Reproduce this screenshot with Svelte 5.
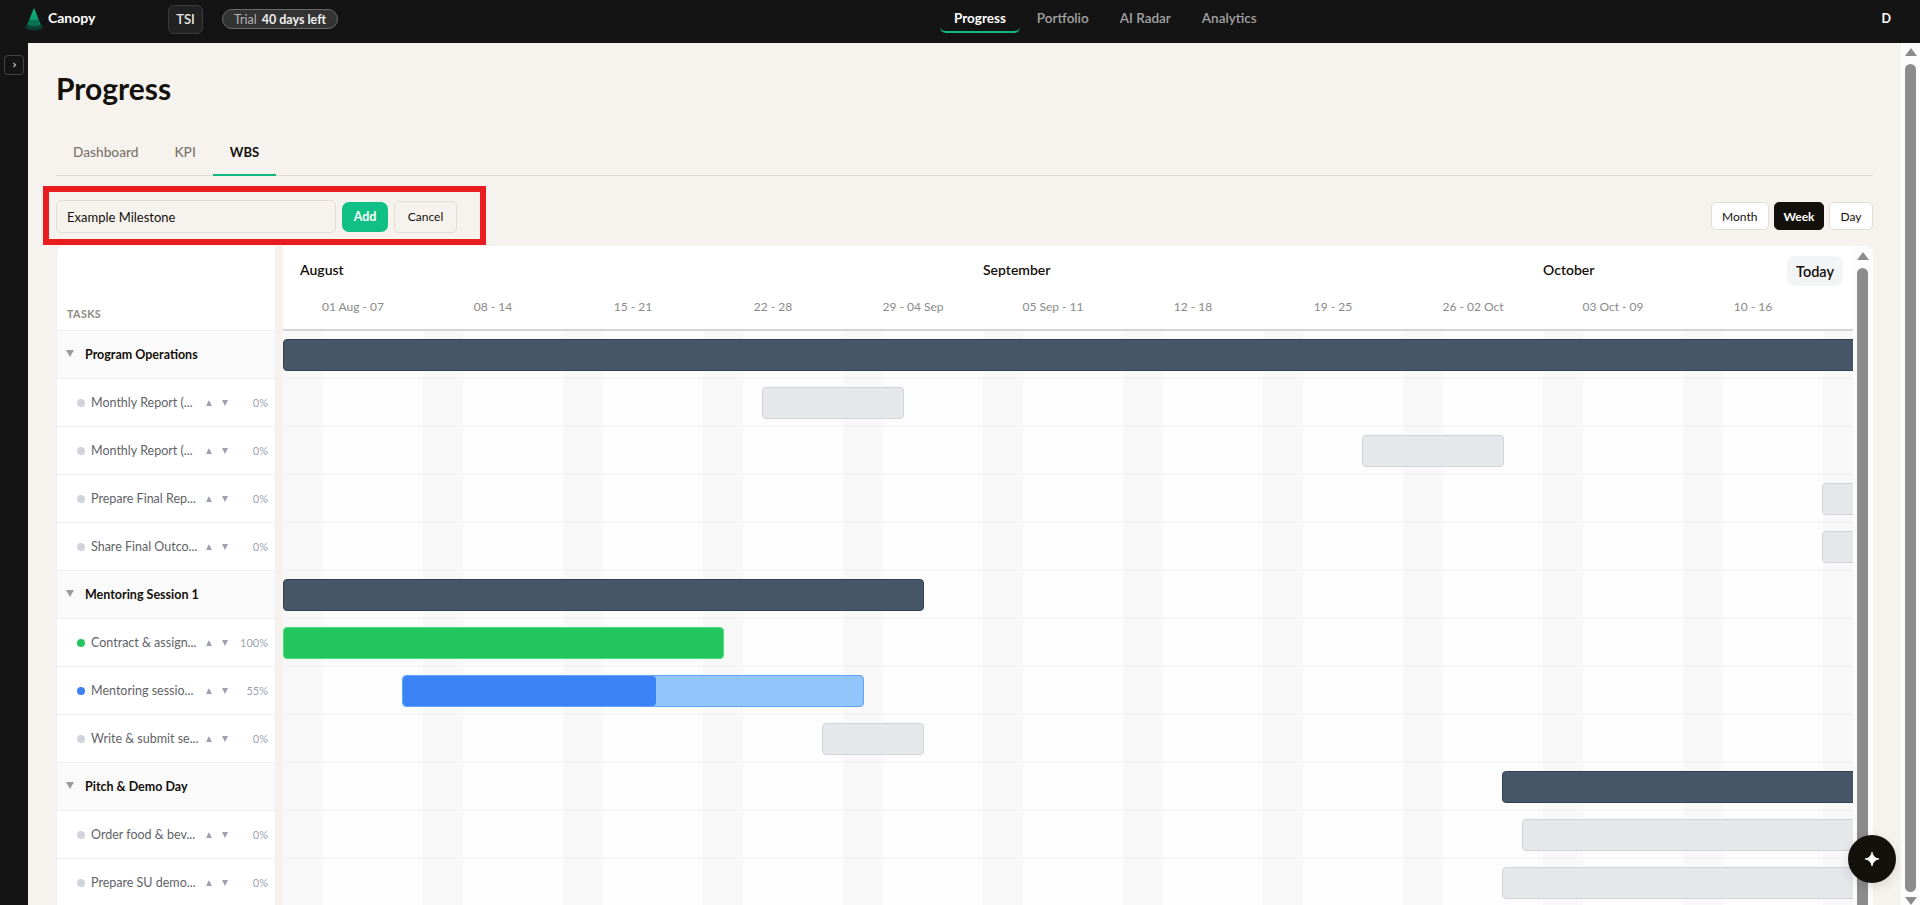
<script>
	const nav = ['Progress', 'Portfolio', 'AI Radar', 'Analytics'];
	const tabs = ['Dashboard', 'KPI', 'WBS'];
	const months = [
		{ label: 'August', left: 17 },
		{ label: 'September', left: 700 },
		{ label: 'October', left: 1260 }
	];
	const weeks = ['01 Aug - 07', '08 - 14', '15 - 21', '22 - 28', '29 - 04 Sep', '05 Sep - 11', '12 - 18', '19 - 25', '26 - 02 Oct', '03 Oct - 09', '10 - 16'];
	// start / end are in days from 1 Aug, one day is 20px
	const rows = [
		{ group: true, name: 'Program Operations', start: 0, end: 79 },
		{ name: 'Monthly Report (...', pct: 0, start: 24, end: 31 },
		{ name: 'Monthly Report (...', pct: 0, start: 54, end: 61 },
		{ name: 'Prepare Final Rep...', pct: 0, start: 77, end: 79 },
		{ name: 'Share Final Outco...', pct: 0, start: 77, end: 79 },
		{ group: true, name: 'Mentoring Session 1', start: 0, end: 32 },
		{ name: 'Contract & assign...', pct: 100, start: 0, end: 22 },
		{ name: 'Mentoring sessio...', pct: 55, start: 6, end: 29 },
		{ name: 'Write & submit se...', pct: 0, start: 27, end: 32 },
		{ group: true, name: 'Pitch & Demo Day', start: 61, end: 79 },
		{ name: 'Order food & bev...', pct: 0, start: 62, end: 79 },
		{ name: 'Prepare SU demo...', pct: 0, start: 61, end: 79 }
	];
	const status = (r) => (r.pct === 100 ? 'done' : r.pct > 0 ? 'active' : 'todo');
	const barLeft = (r) => (r.start > 0 ? r.start * 20 - 1 : 0);
</script>

<div class="page">
	<header class="topbar">
		<div class="brand">
			<svg width="20" height="24" viewBox="0 0 20 24">
				<defs>
					<linearGradient id="cone" x1="0" y1="0" x2="0" y2="1">
						<stop offset="0" stop-color="#10b981" />
						<stop offset="0.55" stop-color="#0f9d6e" />
						<stop offset="1" stop-color="#0b5a43" />
					</linearGradient>
				</defs>
				<ellipse cx="10" cy="20" rx="9" ry="3.5" fill="#0a3d2f" />
				<path d="M10 1 L17 18 Q10 22 3 18 Z" fill="url(#cone)" />
				<path d="M5.4 12.5 Q10 15 14.6 12.5 L15.4 14.4 Q10 17 4.6 14.4 Z" fill="#0b6e50" />
			</svg>
			<span>Canopy</span>
		</div>
		<div class="org">TSI</div>
		<div class="trial"><span>Trial</span> <b>40 days left</b></div>
		<nav>
			{#each nav as item, i}
				<a class:on={i === 0} href="#top">{item}</a>
			{/each}
		</nav>
		<div class="user">D</div>
	</header>

	<div class="body">
		<aside class="side">
			<button class="expand" aria-label="Expand">
				<svg width="5" height="6" viewBox="0 0 5 6"><path d="M1.5 1 L3.5 3 L1.5 5" fill="none" stroke="#b9b9b9" stroke-width="1.2" /></svg>
			</button>
		</aside>

		<main>
			<h1>Progress</h1>
			<div class="tabs">
				{#each tabs as tab, i}
					<a class:on={i === 2} href="#top">{tab}</a>
				{/each}
			</div>

			<div class="toolbar">
				<div class="add-form">
					<input value="Example Milestone" />
					<button class="add">Add</button>
					<button class="cancel">Cancel</button>
				</div>
				<div class="scale">
					<button>Month</button>
					<button class="on">Week</button>
					<button>Day</button>
				</div>
				<div class="callout"></div>
			</div>

			<div class="gantt">
				<section class="tasks">
					<div class="tasks-head">TASKS</div>
					{#each rows as r}
						{#if r.group}
							<div class="task group">
								<i class="caret"></i>
								<span class="group-name">{r.name}</span>
							</div>
						{:else}
							<div class="task">
								<i class="dot {status(r)}"></i>
								<span class="name">{r.name}</span>
								<i class="move up"></i>
								<i class="move"></i>
								<span class="pct">{r.pct}%</span>
							</div>
						{/if}
					{/each}
				</section>

				<section class="chart">
					<div class="timeline">
						<div class="chart-head">
							{#each months as m}
								<span class="month" style="left:{m.left}px">{m.label}</span>
							{/each}
							<button class="today">Today</button>
							<div class="weeks">
								{#each weeks as w}
									<span>{w}</span>
								{/each}
							</div>
						</div>
						<div class="grid">
							{#each rows as r}
								<div class="line">
									<div
										class="bar {r.group ? 'summary' : status(r)}"
										style="left:{barLeft(r)}px;width:{r.end * 20 - barLeft(r) + 1}px"
									>
										{#if r.pct > 0 && r.pct < 100}
											<div class="fill" style="width:{r.pct}%"></div>
										{/if}
									</div>
								</div>
							{/each}
						</div>
					</div>
					<div class="bar-scroll">
						<i class="arrow up"></i>
						<div class="thumb"></div>
					</div>
				</section>
			</div>
			<button class="fab" aria-label="Assistant">
				<svg width="16" height="16" viewBox="0 0 16 16"><path d="M8 1 Q9 7 15 8 Q9 9 8 15 Q7 9 1 8 Q7 7 8 1 Z" fill="#fff" stroke="#fff" stroke-width=".8" /></svg>
			</button>
		</main>

		<div class="page-scroll">
			<i class="arrow up"></i>
			<div class="thumb"></div>
			<i class="arrow"></i>
		</div>
	</div>
</div>

<style>
	:global(body) {
		font-family: Lato, "Noto Sans", sans-serif;
		background: #141414;
	}
	.page {
		height: 905px;
		display: flex;
		flex-direction: column;
		overflow: hidden;
	}
	button {
		font: inherit;
		cursor: pointer;
	}
	a {
		text-decoration: none;
	}

	.topbar {
		height: 43px;
		flex: none;
		display: flex;
		align-items: center;
		position: relative;
		background: #141414;
		color: #fff;
	}
	.brand {
		display: flex;
		align-items: center;
		gap: 4px;
		margin-left: 24px;
		width: 144px;
		font-size: 14px;
		font-weight: 700;
		margin-top: -6px;
	}
	.brand span {
		margin-top: -2px;
	}
	.org {
		width: 35px;
		height: 29px;
		box-sizing: border-box;
		display: grid;
		place-items: center;
		margin-top: -5px;
		background: #222;
		border: 1px solid #3b3b3b;
		border-radius: 6px;
		font-size: 13px;
		font-weight: 600;
		color: #e8e8e8;
	}
	.trial {
		margin-left: 19px;
		margin-top: -5px;
		width: 116px;
		height: 20px;
		box-sizing: border-box;
		display: flex;
		align-items: center;
		justify-content: center;
		gap: 5px;
		background: #333;
		border: 1px solid #6b6b6b;
		border-radius: 10px;
		font-size: 12.5px;
		color: #b5b5b5;
		white-space: nowrap;
	}
	.trial b {
		color: #eee;
		font-weight: 700;
	}
	nav {
		position: absolute;
		left: 940px;
		top: 0;
		display: flex;
	}
	nav a {
		height: 33px;
		box-sizing: border-box;
		padding: 10px 14px 0;
		margin-right: 3px;
		font-size: 13.5px;
		font-weight: 600;
		color: #a3a3a3;
		white-space: nowrap;
	}
	nav a.on {
		color: #fff;
		font-weight: 700;
		border-bottom: 2px solid #10b981;
		border-radius: 0 0 6px 6px;
	}
	.user {
		position: absolute;
		right: 29px;
		top: 11px;
		font-size: 12.5px;
		font-weight: 700;
	}

	.body {
		flex: 1;
		display: flex;
		min-height: 0;
	}
	.side {
		width: 28px;
		flex: none;
		padding: 12px 0 0 4px;
		box-sizing: border-box;
	}
	.expand {
		width: 20px;
		height: 20px;
		padding: 0;
		display: grid;
		place-items: center;
		background: transparent;
		border: 1px solid #444;
		border-radius: 4px;
	}

	main {
		flex: 1;
		min-width: 0;
		position: relative;
		background: #f6f3ee;
		padding: 0 28px 0 28px;
		overflow: hidden;
	}
	h1 {
		margin: 27px 0 0;
		height: 36px;
		font-size: 30px;
		line-height: 36px;
		font-weight: 700;
		color: #14100b;
	}
	.tabs {
		margin-top: 25px;
		height: 45px;
		box-sizing: border-box;
		display: flex;
		border-bottom: 1px solid #e2ddd5;
	}
	.tabs a {
		padding: 12px 18px 0;
		font-size: 13.7px;
		font-weight: 500;
		color: #7b746c;
		position: relative;
	}
	.tabs a:first-child {
		padding-left: 17px;
	}
	.tabs a:nth-child(2) {
		padding-right: 17px;
	}
	.tabs a.on {
		color: #14100b;
		font-size: 13px;
		font-weight: 700;
		padding: 13px 17px 0;
	}
	.tabs a.on::after {
		content: '';
		position: absolute;
		left: 0;
		right: 0;
		bottom: -1px;
		height: 2px;
		background: #10b981;
	}

	.toolbar {
		height: 70px;
		display: flex;
		justify-content: space-between;
		align-items: flex-start;
		padding-top: 24px;
		box-sizing: border-box;
		position: relative;
	}
	.add-form {
		display: flex;
		align-items: center;
		gap: 6px;
	}
	.add-form input {
		width: 280px;
		height: 33px;
		box-sizing: border-box;
		padding: 0 10px;
		background: #f6f3ee;
		border: 1px solid #e2ddd5;
		border-radius: 5px;
		font: 13px Lato, sans-serif;
		color: #14100b;
	}
	.add {
		width: 46px;
		height: 30px;
		background: #10c084;
		border: 0;
		border-radius: 7px;
		color: #fff;
		font-size: 12.5px;
		font-weight: 700;
	}
	.cancel {
		width: 63px;
		height: 32px;
		background: #f6f3ee;
		border: 1px solid #e2ddd5;
		border-radius: 5px;
		font-size: 12px;
		color: #14100b;
	}
	.scale {
		display: flex;
		gap: 5px;
		margin-top: 2px;
	}
	.scale button {
		height: 28px;
		padding: 0 10.5px;
		background: #fff;
		border: 1px solid #e2ddd5;
		border-radius: 5px;
		font-size: 12px;
		color: #14100b;
	}
	.scale button.on {
		padding: 0 8.5px;
		background: #14100b;
		border-color: #14100b;
		color: #fff;
		font-weight: 700;
	}
	.callout {
		position: absolute;
		left: -13px;
		top: 10px;
		width: 443px;
		height: 59px;
		box-sizing: border-box;
		border: 6px solid #e91c1f;
		pointer-events: none;
	}

	.gantt {
		display: flex;
		gap: 7px;
		align-items: flex-start;
	}
	.tasks {
		width: 220px;
		flex: none;
		background: #fff;
		border-right: 1px solid #eef0f3;
		border-left: 1px solid #eef0f3;
		box-sizing: border-box;
		border-radius: 8px 0 0 0;
	}
	.tasks-head {
		height: 85px;
		box-sizing: border-box;
		padding: 61px 0 0 10px;
		font-size: 10.7px;
		font-weight: 700;
		letter-spacing: 0.4px;
		color: #8d8880;
		border-bottom: 1px solid #eef0f3;
	}
	.task {
		height: 48px;
		box-sizing: border-box;
		display: flex;
		align-items: center;
		padding-left: 20px;
		border-bottom: 1px solid #eef0f3;
	}
	.task.group {
		padding-left: 9px;
		background: #fafafa;
	}
	.caret {
		width: 0;
		height: 0;
		border: 4px solid transparent;
		border-top: 7px solid #9a9a9e;
		border-bottom: 0;
		margin-right: 11px;
		margin-top: -2px;
	}
	.group-name {
		font-size: 12.5px;
		font-weight: 700;
		color: #14100b;
		white-space: nowrap;
	}
	.dot {
		width: 8px;
		height: 8px;
		border-radius: 50%;
		margin-right: 6px;
		flex: none;
		background: #d1d5db;
	}
	.dot.done {
		background: #22c55e;
	}
	.dot.active {
		background: #3b82f6;
	}
	.name {
		width: 115px;
		flex: none;
		font-size: 12.5px;
		color: #5f6368;
		white-space: nowrap;
		overflow: hidden;
	}
	.move {
		width: 0;
		height: 0;
		flex: none;
		border: 3.5px solid transparent;
		border-top: 6px solid #9ca3af;
		border-bottom: 0;
		margin-right: 10px;
	}
	.move.up {
		border-top: 0;
		border-bottom: 6px solid #9ca3af;
	}
	.pct {
		flex: 1;
		text-align: right;
		padding-right: 7px;
		margin-left: -7px;
		font-size: 11px;
		color: #9ca3af;
	}

	.chart {
		flex: 1;
		min-width: 0;
		display: flex;
		background: #fff;
		border-radius: 0 8px 0 0;
		overflow: hidden;
	}
	.timeline {
		flex: 1;
		min-width: 0;
		overflow: hidden;
	}
	.chart-head {
		height: 85px;
		position: relative;
		box-sizing: border-box;
		border-bottom: 2px solid #d4d4d4;
	}
	.month {
		position: absolute;
		top: 15px;
		font-size: 14px;
		font-weight: 600;
		color: #14100b;
	}
	.today {
		position: absolute;
		right: 10px;
		top: 10px;
		width: 56px;
		height: 30px;
		padding: 0;
		background: #f3f4f6;
		border: 0;
		border-radius: 8px;
		font-size: 14.5px;
		font-weight: 600;
		color: #14100b;
	}
	.weeks {
		position: absolute;
		left: 0;
		top: 53px;
		display: flex;
		white-space: nowrap;
	}
	.weeks span {
		width: 140px;
		flex: none;
		text-align: center;
		font-size: 12px;
		color: #8a8a8a;
	}
	.grid {
		/* weekend stripes, two of every seven days */
		background: repeating-linear-gradient(90deg, #f8f8f8 0 40px, #fdfdfd 40px 140px);
	}
	.line {
		height: 48px;
		position: relative;
		box-sizing: border-box;
		border-bottom: 2px solid #f5f5f5;
	}
	.bar {
		position: absolute;
		top: 8px;
		height: 32px;
		box-sizing: border-box;
		border: 1px solid;
		border-radius: 4px;
		overflow: hidden;
	}
	.bar.summary {
		background: #475569;
		border-color: #334155;
	}
	.bar.todo {
		background: #e5e7eb;
		border-color: #d1d5db;
	}
	.bar.done {
		background: #22c55e;
		border-color: #4ade80;
	}
	.bar.active {
		background: #93c5fd;
		border-color: #60a5fa;
	}
	.fill {
		height: 100%;
		background: #3b82f6;
		border-radius: 4px;
	}

	.bar-scroll,
	.page-scroll {
		flex: none;
		display: flex;
		flex-direction: column;
		align-items: center;
		box-sizing: border-box;
	}
	.bar-scroll {
		width: 20px;
		padding-top: 6px;
		background: #fcfcfc;
		padding-right: 1px;
	}
	.page-scroll {
		width: 19px;
		padding-top: 5px;
		background: #fcfcfc;
	}
	.arrow {
		width: 0;
		height: 0;
		border: 6px solid transparent;
		border-top: 8px solid #8c8c8c;
		border-bottom: 0;
	}
	.arrow.up {
		border-top: 0;
		border-bottom: 8px solid #8c8c8c;
	}
	.thumb {
		width: 11px;
		flex: 1;
		margin: 8px 0 5px;
		background: #8c8c8c;
		border-radius: 6px 6px 0 0;
	}
	.bar-scroll .thumb {
		height: 700px;
		flex: none;
	}
	.page-scroll .thumb {
		border-radius: 6px;
	}

	.fab {
		position: absolute;
		right: 5px;
		top: 792px;
		width: 48px;
		height: 48px;
		display: grid;
		place-items: center;
		padding: 0;
		background: #14100b;
		border: 0;
		border-radius: 50%;
		box-shadow: 0 4px 12px rgba(0, 0, 0, 0.12);
	}
</style>
